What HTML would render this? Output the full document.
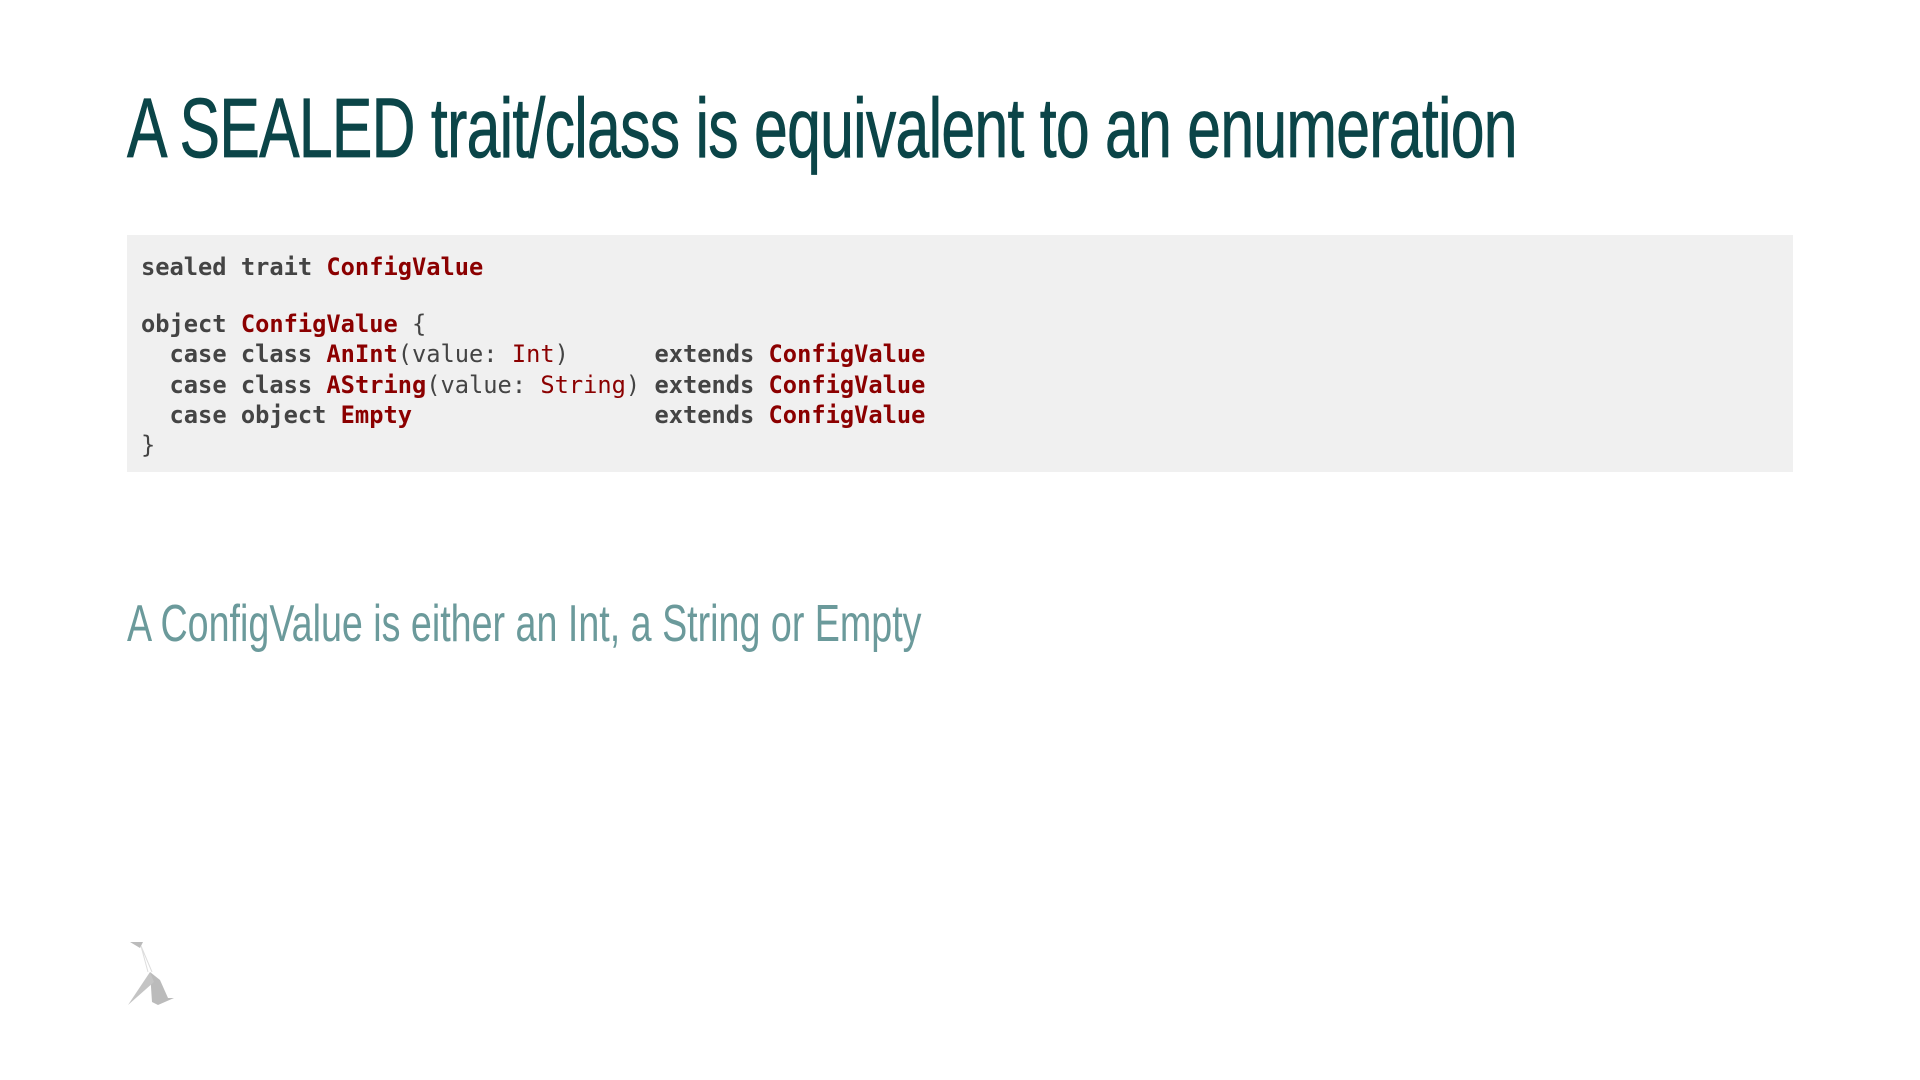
<!DOCTYPE html>
<html><head><meta charset="utf-8"><style>
html,body{margin:0;padding:0;background:#fff;width:1920px;height:1080px;overflow:hidden;position:relative}
.t{position:absolute;left:127px;top:80px;font-family:"Liberation Sans",sans-serif;font-size:84px;color:#0b4548;white-space:nowrap;transform-origin:0 0;transform:scaleX(0.7227);letter-spacing:-1px;-webkit-text-stroke:0.8px #0b4548}
.code{position:absolute;left:127px;top:235px;width:1666px;height:237px;background:#f0f0f0}
pre{margin:0;position:absolute;left:14px;top:13px;font-family:"DejaVu Sans Mono","Liberation Mono",monospace;font-size:23.7px;line-height:30.4px;color:#444}
.l1{position:relative;top:4px}
b{color:#444}
.r{color:#8b0000;font-weight:bold}
.s{color:#8b0000}
.sub{position:absolute;left:127px;top:594px;font-family:"Liberation Sans",sans-serif;font-size:52px;color:#6b9a9b;white-space:nowrap;transform-origin:0 0;transform:scaleX(0.724)}
</style></head><body>
<div class="t">A SEALED trait/class is equivalent to an enumeration</div>
<div class="code"><pre><span class="l1"><b>sealed trait</b> <span class="r">ConfigValue</span></span>

<b>object</b> <span class="r">ConfigValue</span> {
  <b>case class</b> <span class="r">AnInt</span>(value: <span class="s">Int</span>)      <b>extends</b> <span class="r">ConfigValue</span>
  <b>case class</b> <span class="r">AString</span>(value: <span class="s">String</span>) <b>extends</b> <span class="r">ConfigValue</span>
  <b>case object</b> <span class="r">Empty</span>                 <b>extends</b> <span class="r">ConfigValue</span>
}</pre></div>
<div class="sub">A ConfigValue is either an Int, a String or Empty</div>
<svg style="position:absolute;left:110px;top:920px" width="100" height="100" viewBox="0 0 100 100">
<polygon points="20,22 33,22 30,28" fill="#bbb"/>
<path d="M31,26 L42,52 M31,26 L38,52" stroke="#ddd" stroke-width="1" fill="none"/>
<polygon points="40,52 50,60 58,78 64,78 48,85 42,82" fill="#bbb"/>
<polygon points="40,52 44,62 18,85" fill="#c4c4c4"/>
</svg>
</body></html>
